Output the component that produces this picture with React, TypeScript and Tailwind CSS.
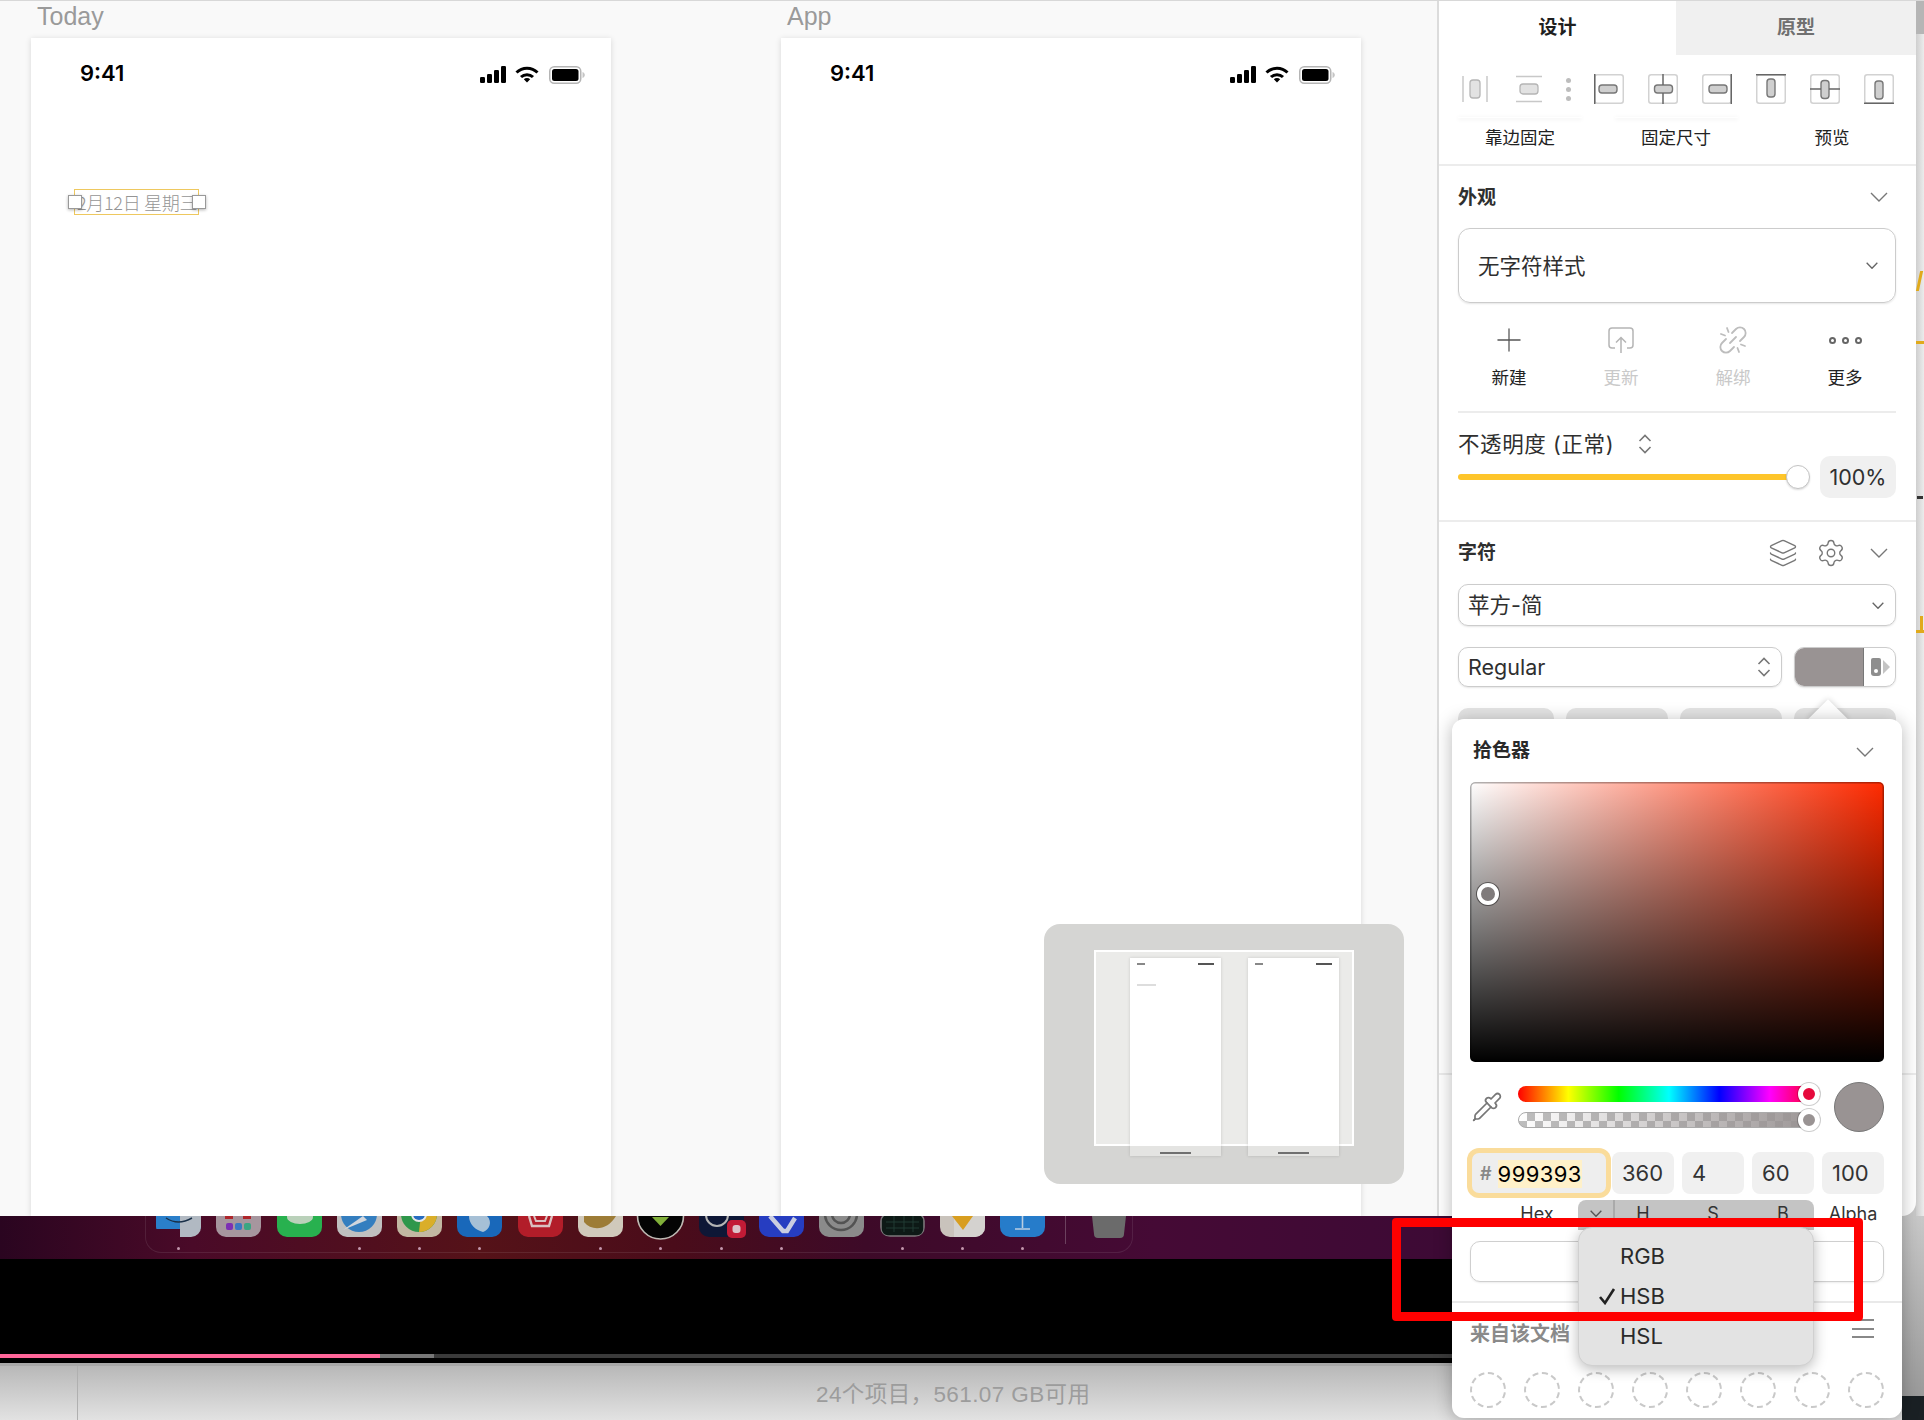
import React from "react";
import { Layers, Settings, Pipette, Plus } from "lucide-react";

const font = "font-['Inter','Noto_Sans_CJK_SC',sans-serif]";

function Chevron({ w = 18, h = 10, color = "#777", sw = 1.4 }: { w?: number; h?: number; color?: string; sw?: number }) {
  return (
    <svg width={w} height={h} viewBox="0 0 18 10" fill="none" preserveAspectRatio="none">
      <path d="M1 1l8 8 8-8" stroke={color} strokeWidth={sw} />
    </svg>
  );
}

function UpDown() {
  return (
    <svg width="14" height="22" viewBox="0 0 14 22" fill="none">
      <path d="M1.5 8L7 2.5 12.5 8M1.5 14L7 19.5 12.5 14" stroke="#777" strokeWidth="1.6" />
    </svg>
  );
}

function AlignBox({ kind }: { kind: string }) {
  const horizontal = kind === "l" || kind === "c" || kind === "r";
  return (
    <svg width="30" height="30" viewBox="0 0 30 30" fill="none">
      <rect x="0.75" y="0.75" width="28.5" height="28.5" rx="2.5" stroke="#d2d2d2" strokeWidth="1.5" />
      {horizontal ? (
        <rect x={kind === "l" ? 5 : kind === "c" ? 6.5 : 7} y="11" width="18" height="8" rx="3" fill="#cfcfcf" stroke="#777" strokeWidth="1.4" />
      ) : (
        <rect x="11" y={kind === "t" ? 5 : kind === "m" ? 6.5 : 7} width="8" height="18" rx="3" fill="#cfcfcf" stroke="#777" strokeWidth="1.4" />
      )}
      {kind === "l" && <path d="M0.75 0v30" stroke="#666" strokeWidth="1.5" />}
      {kind === "c" && <path d="M15 0v11M15 19v11" stroke="#666" strokeWidth="1.5" />}
      {kind === "r" && <path d="M29.25 0v30" stroke="#666" strokeWidth="1.5" />}
      {kind === "t" && <path d="M0 0.75h30" stroke="#666" strokeWidth="1.5" />}
      {kind === "m" && <path d="M0 15h11M19 15h11" stroke="#666" strokeWidth="1.5" />}
      {kind === "b" && <path d="M0 29.25h30" stroke="#666" strokeWidth="1.5" />}
    </svg>
  );
}

function StatusIcons() {
  return (
    <div className="flex items-center mt-[1px]">
      <svg width="26" height="17" viewBox="0 0 26 17" fill="#000">
        <rect x="0" y="11" width="5" height="6" rx="1.2" />
        <rect x="7" y="8" width="5" height="9" rx="1.2" />
        <rect x="14" y="4" width="5" height="13" rx="1.2" />
        <rect x="21" y="0" width="5" height="17" rx="1.2" />
      </svg>
      <svg className="ml-[9px]" width="24" height="17" viewBox="0 0 24 17" fill="none" stroke="#000" strokeWidth="3">
        <path d="M1.5 6.5a15 15 0 0 1 21 0" />
        <path d="M6 11a8.8 8.8 0 0 1 12 0" />
        <path d="M12 16.5L8.8 13.3a4.6 4.6 0 0 1 6.4 0z" fill="#000" stroke="none" />
      </svg>
      <svg className="ml-[10px]" width="36" height="18" viewBox="0 0 36 18" fill="none">
        <rect x="0.75" y="0.75" width="31" height="16.5" rx="4.5" stroke="#b5b5b5" strokeWidth="1.5" />
        <rect x="3" y="3" width="26.5" height="12" rx="2.5" fill="#000" />
        <path d="M33.5 6v6c1.5-.5 2.3-1.6 2.3-3s-.8-2.5-2.3-3z" fill="#c5c5c5" />
      </svg>
    </div>
  );
}

function Phone({ label, children }: { label: string; children?: React.ReactNode }) {
  return (
    <div className="flex flex-col w-[580px] h-full">
      <div className="h-[37px] pl-[6px] leading-[30px] text-[25px] text-[#9a9a9a] font-['Liberation_Sans',sans-serif]">{label}</div>
      <div className="flex-1 bg-white shadow-[0_1px_6px_rgba(0,0,0,0.14)]">
        <div className="mt-[24px] pl-[49px] pr-[26px] flex items-center justify-between h-[24px]">
          <span className="text-[22px] font-semibold text-black font-['Inter',sans-serif] -mt-[2px]">9:41</span>
          <StatusIcons />
        </div>
        {children}
      </div>
    </div>
  );
}

const dockItems: { dot: boolean; art: React.ReactNode; tall?: boolean }[] = [
  { dot: true, art: (<><rect width="45" height="21" y="-8" rx="0" fill="#2f8de0" /><rect x="24" y="-8" width="21" height="29" fill="#c5ced8" /><path d="M10 2q12 8 26 0" stroke="#1c3550" strokeWidth="1.5" fill="none" /></>) },
  { dot: false, art: (<><rect width="45" height="21" fill="#b9a7b0" /><rect x="9" y="0" width="8" height="3" fill="#c22a30" /><rect x="27" y="0" width="8" height="3" fill="#c22a30" /><rect x="10" y="7" width="7" height="7" rx="2" fill="#8a34c8" /><rect x="19" y="7" width="7" height="7" rx="2" fill="#3f86d8" /><rect x="28" y="7" width="7" height="7" rx="2" fill="#40b890" /></>) },
  { dot: false, art: (<><rect width="45" height="21" fill="#2cc558" /><ellipse cx="23" cy="1" rx="13" ry="7" fill="#cfe8cf" /></>) },
  { dot: true, art: (<><rect width="45" height="21" fill="#d5d5d5" /><circle cx="22" cy="-2" r="18" fill="#3a8cd4" /><path d="M6 14L26 0l4 4z" fill="#e8eef5" /></>) },
  { dot: true, art: (<><rect width="45" height="21" fill="#d8ccb4" /><circle cx="22" cy="-2" r="18" fill="#34a853" /><path d="M22 16a18 18 0 0 0 18-18H24z" fill="#f2c12e" /><circle cx="22" cy="-2" r="8" fill="#fff" /><circle cx="22" cy="-2" r="6" fill="#2a78d6" /></>) },
  { dot: true, art: (<><rect width="45" height="21" fill="#1c74cf" /><path d="M12 0h18c6 6 2 14-4 16C18 14 12 8 12 0z" fill="#b9d5ee" /></>) },
  { dot: false, art: (<><rect width="45" height="21" fill="#c6202e" /><path d="M11 0l3 10h17l3-10" stroke="#f2d5d5" strokeWidth="2.4" fill="none" /><path d="M16 0l2 5h9l2-5" stroke="#f2d5d5" strokeWidth="2" fill="none" /></>) },
  { dot: true, art: (<><rect width="45" height="21" fill="#e7dfd0" /><path d="M6 6C14 16 30 14 38 0H6z" fill="#ae8a3c" /></>) },
  { dot: true, tall: true, art: (<><circle cx="22.5" cy="0" r="23" fill="#050505" stroke="#d4cfc8" strokeWidth="1.6" /><path d="M14 1h17l-8.5 9z" fill="#8fc440" /></>) },
  { dot: true, tall: true, art: (<><rect y="-12" width="45" height="33" rx="10" fill="#101a3c" /><circle cx="18" cy="-1" r="11" fill="none" stroke="#c8c8c8" strokeWidth="2" /><rect x="28" y="4" width="19" height="18" rx="5" fill="#d81e3c" /><rect x="33.5" y="9" width="8" height="8" rx="3" fill="#f4d8de" /></>) },
  { dot: true, art: (<><rect width="45" height="21" fill="#2a44d6" /><path d="M11 0l13 15h4L36 2" stroke="#dfe4fa" strokeWidth="4.5" fill="none" /></>) },
  { dot: false, art: (<><rect width="45" height="21" fill="#9a9a9a" /><circle cx="22" cy="-2" r="16" fill="none" stroke="#5c5c5c" strokeWidth="2.5" /><circle cx="22" cy="-2" r="9" fill="none" stroke="#5c5c5c" strokeWidth="2.5" /></>) },
  { dot: true, art: (<><rect x="1" y="-2" width="43" height="22" rx="7" fill="#0e1c18" stroke="#8a8588" strokeWidth="1.6" /><path d="M6 6h33M6 12h33M14 0v16M24 0v16M33 0v16" stroke="#244038" strokeWidth="1" /></>) },
  { dot: true, art: (<><rect width="45" height="21" fill="#dfd9d1" /><rect x="14" width="31" height="21" fill="#ece9e6" /><path d="M12 0h21l-10 14z" fill="#f0b024" /></>) },
  { dot: true, art: (<><rect width="45" height="21" fill="#2a8ae0" /><path d="M22.5 0v12M15 13h15" stroke="#cfe5fa" strokeWidth="1.6" /></>) },
];

function DockCell({ dot, art, tall }: { dot: boolean; art: React.ReactNode; tall?: boolean }) {
  return (
    <div className="flex flex-col items-center w-[45px]">
      <svg width="45" height="21" viewBox="0 0 45 21" className={tall ? "overflow-visible" : "rounded-b-[10px] overflow-hidden"}>{art}</svg>
      <div className={dot ? "mt-[10px] w-[3px] h-[3px] rounded-full bg-[#d9a8c0]" : "mt-[10px] w-[3px] h-[3px]"} />
    </div>
  );
}

function MiniPhone({ date }: { date?: boolean }) {
  return (
    <div className="w-[91px] h-[198px] flex flex-col shadow-[0_0_3px_rgba(0,0,0,0.15)]">
      <div className="h-[188px] bg-white px-[7px] pt-[5px]">
        <div className="flex items-start justify-between blur-[0.7px]">
          <div className="w-[8px] h-[2px] bg-[#888]" />
          <div className="w-[16px] h-[2px] bg-[#555]" />
        </div>
        {date && <div className="mt-[19px] w-[19px] h-[2px] bg-[#dddddd] blur-[0.5px]" />}
      </div>
      <div className="flex-1 bg-[#e4e4e2] flex items-end justify-center pb-[2px]">
        <div className="w-[31px] h-[2px] bg-[#707070]" />
      </div>
    </div>
  );
}

function Minimap() {
  return (
    <div className="absolute left-[1044px] top-[923px] w-[360px] h-[260px] rounded-[16px] bg-[#d5d5d3]">
      <div className="absolute left-[50px] top-[26px] w-[260px] h-[196px] bg-[#ebebe9] border-2 border-white" />
      <div className="absolute left-[86px] top-[34px]"><MiniPhone date /></div>
      <div className="absolute left-[204px] top-[34px]"><MiniPhone /></div>
    </div>
  );
}

function Popover() {
  const fields = ["360", "4", "60", "100"];
  return (
    <div className={`absolute left-[1452px] top-[719px] w-[450px] h-[699px] ${font}`}>
      <div className="absolute left-[362px] top-[-14px] w-[28px] h-[28px] rotate-45 bg-white shadow-[0_0_6px_rgba(0,0,0,0.2)]" />
      <div className="relative w-full h-full bg-white rounded-[12px] shadow-[0_2px_18px_rgba(0,0,0,0.28)] px-[18px] flex flex-col">
        <div className="h-[63px] flex items-center justify-between pt-[2px] pr-[10px]">
          <span className="text-[19px] font-semibold text-[#2a2a2a] pl-[3px]">拾色器</span>
          <Chevron />
        </div>
        <div className="relative h-[280px] rounded-[5px] bg-[linear-gradient(to_top,#000,transparent),linear-gradient(to_right,#fff,#ff2a00)] shadow-[inset_0_0_0_1.5px_rgba(0,0,0,0.3)]">
          <div className="absolute left-[7px] top-[101px] w-[22px] h-[22px] rounded-full bg-[#807b7b] border-[4px] border-white shadow-[0_0_0_1px_rgba(0,0,0,0.45)]" />
        </div>
        <div className="mt-[20px] h-[50px] flex items-center">
          <Pipette size={32} strokeWidth={1.3} color="#777" className="ml-[1px]" />
          <div className="ml-[15px] w-[302px] flex flex-col gap-[10px]">
            <div className="relative h-[16px] rounded-full bg-[linear-gradient(to_right,#f00,#ff0,#0f0,#0ff,#00f,#f0f,#f00)]">
              <div className="absolute right-0 top-[-3px] w-[22px] h-[22px] rounded-full bg-[#e60a3c] border-[5px] border-white shadow-[0_0_0_1px_rgba(0,0,0,0.2)]" />
            </div>
            <div className="relative h-[16px] rounded-full border border-[#aaa] bg-[linear-gradient(to_right,transparent,#999393),repeating-conic-gradient(#bdbdbd_0_25%,#fff_0_50%)] bg-[length:100%_100%,16px_16px]">
              <div className="absolute right-[-1px] top-[-4px] w-[22px] h-[22px] rounded-full bg-[#999393] border-[5px] border-white shadow-[0_0_0_1px_rgba(0,0,0,0.2)]" />
            </div>
          </div>
          <div className="ml-[14px] w-[50px] h-[50px] rounded-full bg-[#999393] border border-[#777]" />
        </div>
        <div className="mt-[20px] flex gap-[8px] h-[42px]">
          <div className="w-[134px] ml-[2px] -mr-[2px] my-[1px] rounded-[7px] bg-[#eeeeee] shadow-[0_0_0_5px_#fadc9b] flex items-center pl-[8px] pt-[1px]">
            <span className="text-[18px] font-semibold text-[#888]">#</span>
            <span className="ml-[6px] text-[22px] leading-[28px] text-black bg-[#fff1c9] tracking-[0.4px]">999393</span>
          </div>
          {fields.map((t) => (
            <div key={t} className="w-[62px] rounded-[8px] bg-[#f0f0f0] flex items-center pl-[10px] pt-[1px] text-[22px] text-[#333]">{t}</div>
          ))}
        </div>
        <div className="absolute left-[126px] top-[481px] w-[236px] h-[30px] rounded-t-[8px] bg-[#c4c4c4] flex">
          <div className="w-[37px] h-full flex items-start justify-center pt-[10px] border-r-2 border-[#aaaaaa]">
            <Chevron w={12} h={7} color="#555" sw={2} />
          </div>
        </div>
        <div className="relative mt-[8px] h-[24px] text-[18px] leading-[24px] text-[#333] text-center">
          <span className="absolute left-[37px] w-[60px]">Hex</span>
          <span className="absolute left-[143px] w-[60px]">H</span>
          <span className="absolute left-[213px] w-[60px]">S</span>
          <span className="absolute left-[283px] w-[60px]">B</span>
          <span className="absolute left-[353px] w-[60px]">Alpha</span>
        </div>
        <div className="mt-[15px] h-[41px] rounded-[10px] border border-[#cfcfcf] shadow-[0_1px_2px_rgba(0,0,0,0.08)]" />
        <div className="mt-[19px] -mx-[18px] h-[2px] bg-[#e9e9e9]" />
        <div className="mt-[14px] flex items-center justify-between h-[32px] pt-[2px] pr-[10px]">
          <span className="text-[20px] font-semibold text-[#8a8a8a]">来自该文档</span>
          <div className="w-[22px] flex flex-col gap-[6.5px] -mt-[11px]">
            <div className="h-[2px] bg-[#888]" />
            <div className="h-[2px] bg-[#888]" />
            <div className="h-[2px] bg-[#888]" />
          </div>
        </div>
        <div className="mt-[23px] flex gap-[18px]">
          {Array.from({ length: 8 }).map((_, i) => (
            <div key={i} className="w-[36px] h-[36px] rounded-full border-2 border-dashed border-[#c9c9c9]" />
          ))}
        </div>
        <div className="absolute left-[126px] top-[508px] w-[236px] h-[139px] rounded-[14px] bg-[#e3e3e3] shadow-[0_3px_14px_rgba(0,0,0,0.28)] border border-[#d0d0d0] text-[22px] text-[#2a2a2a] flex flex-col pt-[8px]">
          <div className="h-[40px] pl-[41px] flex items-center">RGB</div>
          <div className="h-[40px] pl-[41px] flex items-center relative">
            <svg className="absolute left-[19px] top-[11px]" width="18" height="18" viewBox="0 0 18 18" fill="none"><path d="M2 10l5 6L16 2" stroke="#222" strokeWidth="2.6" /></svg>
            HSB
          </div>
          <div className="h-[40px] pl-[41px] flex items-center">HSL</div>
        </div>
      </div>
    </div>
  );
}

function Panel() {
  const dim = "#c9c9c9";
  return (
    <div className={`relative w-[479px] h-full bg-white border-l-2 border-[#dcdcdc] rounded-br-[14px] overflow-hidden ${font} text-[#2f2f2f]`}>
      <div className="h-[54px] flex text-[19px] font-semibold">
        <div className="w-[237px] flex items-center justify-center text-[#1f1f1f]">设计</div>
        <div className="flex-1 bg-[#f0f0f0] flex items-center justify-center text-[#707070]">原型</div>
      </div>

      <div className="h-[109px]">
        <div className="pt-[19px] pl-[23px] flex items-center h-[49px]">
          <svg width="26" height="30" viewBox="0 0 26 30" fill="none">
            <path d="M1 2v26M25 2v26" stroke="#c8c8c8" strokeWidth="1.5" />
            <rect x="8" y="6" width="10" height="18" rx="3" fill="#e2e2e2" stroke="#b5b5b5" strokeWidth="1.3" />
          </svg>
          <svg className="ml-[28px]" width="26" height="30" viewBox="0 0 26 30" fill="none">
            <path d="M0 2.5h26M0 27.5h26" stroke="#c8c8c8" strokeWidth="1.5" />
            <rect x="4" y="10" width="18" height="10" rx="3" fill="#e2e2e2" stroke="#b5b5b5" strokeWidth="1.3" />
          </svg>
          <div className="ml-[24px] w-[5px] flex flex-col gap-[4px]">
            <div className="w-[5px] h-[5px] rounded-full bg-[#bdbdbd]" />
            <div className="w-[5px] h-[5px] rounded-full bg-[#bdbdbd]" />
            <div className="w-[5px] h-[5px] rounded-full bg-[#bdbdbd]" />
          </div>
          <div className="ml-[23px] flex gap-[24px]">
            {["l", "c", "r", "t", "m", "b"].map((k) => (
              <AlignBox key={k} kind={k} />
            ))}
          </div>
        </div>
        <div className="mt-[13px] pl-[19px] flex h-[1px]">
          <div className="w-[124px] rounded-full shadow-[0_1px_4px_rgba(0,0,0,0.14)]" />
          <div className="ml-[33px] w-[123px] rounded-full shadow-[0_1px_4px_rgba(0,0,0,0.14)]" />
        </div>
        <div className="mt-[8px] pl-[3px] grid grid-cols-[156px_156px_156px] text-center text-[17.5px] leading-[24px] text-[#222]">
          <span>靠边固定</span>
          <span>固定尺寸</span>
          <span>预览</span>
        </div>
      </div>
      <div className="h-[2px] bg-[#ececec]" />

      <div className="pl-[19px] pr-[20px]">
        <div className="h-[62px] flex items-center justify-between pr-[8px]">
          <span className="text-[19px] font-semibold pt-[2px]">外观</span>
          <Chevron />
        </div>
        <div className="h-[75px] rounded-[12px] border border-[#cccccc] shadow-[0_1px_2px_rgba(0,0,0,0.1)] flex items-center justify-between pl-[19px] pr-[17px] text-[21.5px]">
          <span className="pt-[2px]">无字符样式</span>
          <Chevron w={12} h={7} color="#666" sw={2} />
        </div>
        <div className="mt-[18px] -ml-[5px] grid grid-cols-[repeat(4,112px)] text-center text-[17.5px] leading-[26px] text-[#222]">
          <div className="flex flex-col items-center">
            <div className="h-[38px] flex items-center"><Plus size={38} strokeWidth={0.8} color="#555" /></div>
            <span className="mt-[6px]">新建</span>
          </div>
          <div className="flex flex-col items-center" style={{ color: dim }}>
            <div className="h-[38px] flex items-center">
              <svg width="28" height="28" viewBox="0 0 28 28" fill="none" stroke="#b5b5b5" strokeWidth="1.5">
                <path d="M8 22H5a3 3 0 0 1-3-3V5a3 3 0 0 1 3-3h18a3 3 0 0 1 3 3v14a3 3 0 0 1-3 3h-3" />
                <path d="M14 27V12M9 16.5l5-5 5 5" />
              </svg>
            </div>
            <span className="mt-[6px]">更新</span>
          </div>
          <div className="flex flex-col items-center" style={{ color: dim }}>
            <div className="h-[38px] flex items-center">
              <svg width="28" height="28" viewBox="0 0 28 28" fill="none" stroke="#bdbdbd" strokeWidth="1.8" strokeLinecap="round">
                <path d="M13 7l4-4a5 5 0 0 1 8 8l-4 4" />
                <path d="M15 21l-4 4a5 5 0 0 1-8-8l4-4" />
                <path d="M8 2l1.5 4M2 8l4 1.5M20 26l-1.5-4M26 20l-4-1.5M11 17l6-6" />
              </svg>
            </div>
            <span className="mt-[6px]">解绑</span>
          </div>
          <div className="flex flex-col items-center">
            <div className="h-[38px] flex items-center gap-[6px]">
              <div className="w-[7px] h-[7px] rounded-full border-[2px] border-[#666]" />
              <div className="w-[7px] h-[7px] rounded-full border-[2px] border-[#666]" />
              <div className="w-[7px] h-[7px] rounded-full border-[2px] border-[#666]" />
            </div>
            <span className="mt-[6px]">更多</span>
          </div>
        </div>
        <div className="mt-[20px] h-[2px] bg-[#ececec]" />
        <div className="mt-[18px] h-[26px] flex items-center text-[21.5px]">
          <span className="tracking-[0.6px]">不透明度 (正常)</span>
          <span className="ml-[24px] flex"><UpDown /></span>
        </div>
        <div className="-mt-[1px] h-[42px] flex items-center">
          <div className="relative w-[352px] h-[6px] rounded-full mr-[10px]">
            <div className="w-[340px] h-[6px] rounded-full bg-[#fec52a]" />
            <div className="absolute right-0 top-[-9px] w-[24px] h-[24px] rounded-full bg-white border border-[#c4c4c4] shadow-[0_1px_2px_rgba(0,0,0,0.15)]" />
          </div>
          <div className="w-[76px] h-[42px] rounded-[10px] bg-[#f0f0f0] flex items-center justify-center pt-[1px] text-[21.5px]">100%</div>
        </div>
      </div>
      <div className="mt-[22px] h-[2px] bg-[#ececec]" />

      <div className="pl-[19px] pr-[20px]">
        <div className="h-[61px] flex items-center pr-[8px]">
          <span className="text-[19px] font-semibold flex-1 pt-[2px]">字符</span>
          <Layers size={30} strokeWidth={1.1} color="#777" />
          <Settings size={30} strokeWidth={1.1} color="#777" className="ml-[18px]" />
          <span className="ml-[24px]"><Chevron /></span>
        </div>
        <div className="mt-[1px] h-[42px] rounded-[10px] border border-[#cccccc] shadow-[0_1px_2px_rgba(0,0,0,0.1)] flex items-center justify-between pl-[9px] pr-[11px] text-[21.5px]">
          <span>苹方-简</span>
          <Chevron w={12} h={7} color="#666" sw={2} />
        </div>
        <div className="mt-[21px] flex h-[40px] gap-[12px]">
          <div className="w-[324px] rounded-[10px] border border-[#cccccc] shadow-[0_1px_2px_rgba(0,0,0,0.1)] flex items-center justify-between pl-[9px] pr-[10px] text-[21.5px]">
            <span className="pt-[1px]">Regular</span>
            <UpDown />
          </div>
          <div className="flex-1 rounded-[10px] border border-[#cccccc] overflow-hidden flex shadow-[0_1px_2px_rgba(0,0,0,0.1)]">
            <div className="w-[69px] bg-[#999393] border-r border-[#777]" />
            <div className="flex-1 flex items-center justify-center pl-[2px]">
              <svg width="20" height="20" viewBox="0 0 20 20">
                <path d="M0 3a2 2 0 0 1 2-2h6a2 2 0 0 1 2 2v13a3 3 0 0 1-3 3H3a3 3 0 0 1-3-3z" fill="#8e8e8e" />
                <circle cx="5" cy="14" r="2" fill="#fff" />
                <path d="M12 3l7 7-7 7z" fill="#c4c4c4" />
              </svg>
            </div>
          </div>
        </div>
        <div className="mt-[21px] flex gap-[12px] h-[40px]">
          <div className="w-[96px] rounded-[10px] bg-[#e4e4e4]" />
          <div className="w-[102px] rounded-[10px] bg-[#e4e4e4]" />
          <div className="w-[102px] rounded-[10px] bg-[#e4e4e4]" />
          <div className="w-[102px] rounded-[10px] bg-[#e4e4e4]" />
        </div>
      </div>
      <div className="mt-[325px] h-[2px] bg-[#ececec]" />
    </div>
  );
}

export default function App() {
  return (
    <div className="relative w-[1924px] h-[1420px] overflow-hidden bg-black flex flex-col">
      <div className="h-[1216px] flex border-t border-[#d8d8d8] bg-[#c8c8c8]">
        <div className="relative w-[1437px] h-full bg-[#f9f9f9] overflow-hidden flex pl-[31px] gap-[170px]">
          <Phone label="Today">
            <div className="relative ml-[43px] mt-[103px] w-[125px] h-[26px] border border-[#eec85f] bg-white text-[18px] leading-[24px] text-[#959595] pl-[2px] whitespace-nowrap font-['Noto_Sans_CJK_SC',sans-serif] font-light tracking-[-0.3px]">
              2月12日 星期三
              <div className="absolute left-[-7px] top-[5px] w-[14px] h-[14px] bg-white border border-[#999] shadow-[0_1px_3px_rgba(0,0,0,0.3)]" />
              <div className="absolute right-[-8px] top-[5px] w-[14px] h-[14px] bg-white border border-[#999] shadow-[0_1px_3px_rgba(0,0,0,0.3)]" />
            </div>
          </Phone>
          <Phone label="App" />
          <Minimap />
        </div>
        <Panel />
        <div className="w-[8px] h-full bg-[linear-gradient(to_right,#cfcfcf,#ececec)] flex flex-col">
          <div className="h-[33px] bg-[#b5b5b5]" />
          <div className="mt-[237px] w-[3px] h-[20px] bg-[#e0aa1c] ml-[2px] -skew-x-12" />
          <div className="mt-[50px] w-[8px] h-[3px] bg-[#e0aa1c]" />
          <div className="mt-[152px] w-[6px] h-[3px] ml-[1px] bg-[#333]" />
          <div className="mt-[117px] w-[3px] h-[14px] ml-[4px] bg-[#e0aa1c]" />
          <div className="w-[8px] h-[3px] bg-[#e0aa1c]" />
        </div>
      </div>

      <div className="h-[43px] overflow-hidden bg-[linear-gradient(90deg,#2a0520_0%,#4a0a28_10%,#551218_25%,#4a0c1a_35%,#3d0a28_45%,#450a35_60%,#3d0a35_75%,#4a0a30_88%,#5a1016_100%)]">
        <div className="ml-[145px] w-[988px] h-[37px] border-x border-b border-white/10 rounded-b-[16px] pl-[10px] flex items-start blur-[0.6px] brightness-90">
          <div className="flex gap-[15.3px]">
            {dockItems.map((d, i) => (
              <DockCell key={i} dot={d.dot} art={d.art} tall={d.tall} />
            ))}
          </div>
          <div className="ml-[20px] w-px h-[28px] bg-white/25" />
          <svg className="ml-[26px]" width="34" height="22" viewBox="0 0 34 22"><path d="M0 0h34l-2 18a4 4 0 0 1-4 4H6a4 4 0 0 1-4-4z" fill="#777" /></svg>
        </div>
      </div>

      <div className="h-[95px] bg-black" />
      <div className="h-[4px] flex bg-[#3a3a3a]">
        <div className="w-[380px] bg-[#ff6699]" />
        <div className="w-[54px] bg-[#777]" />
      </div>
      <div className="h-[5px] bg-black" />
      <div className="flex-1 flex bg-[linear-gradient(to_bottom,#b8b8b8,#e2e2e2)] border-t-[3px] border-[#a8a8a8]">
        <div className="w-[78px] border-r border-[#b0b0b0]" />
        <div className="flex-1 pl-[738px] pt-[11px] text-[22.5px] leading-[36px] text-[#9c9c9c] font-['Liberation_Sans','Noto_Sans_CJK_SC',sans-serif] tracking-[0.4px]">24个项目，561.07 GB可用</div>
      </div>

      <div className="absolute left-[1902px] top-[1216px] w-[22px] h-[180px] bg-[linear-gradient(to_bottom,#c8c8c8,#9a9a9a)]" />
      <div className="absolute left-[1902px] top-[1396px] w-[22px] h-[24px] bg-[#1a2024]" />

      <Popover />

      <div className="absolute left-[1392px] top-[1218px] w-[471px] h-[103px] border-[9px] border-[#ff0000] rounded-[4px]" />
    </div>
  );
}
